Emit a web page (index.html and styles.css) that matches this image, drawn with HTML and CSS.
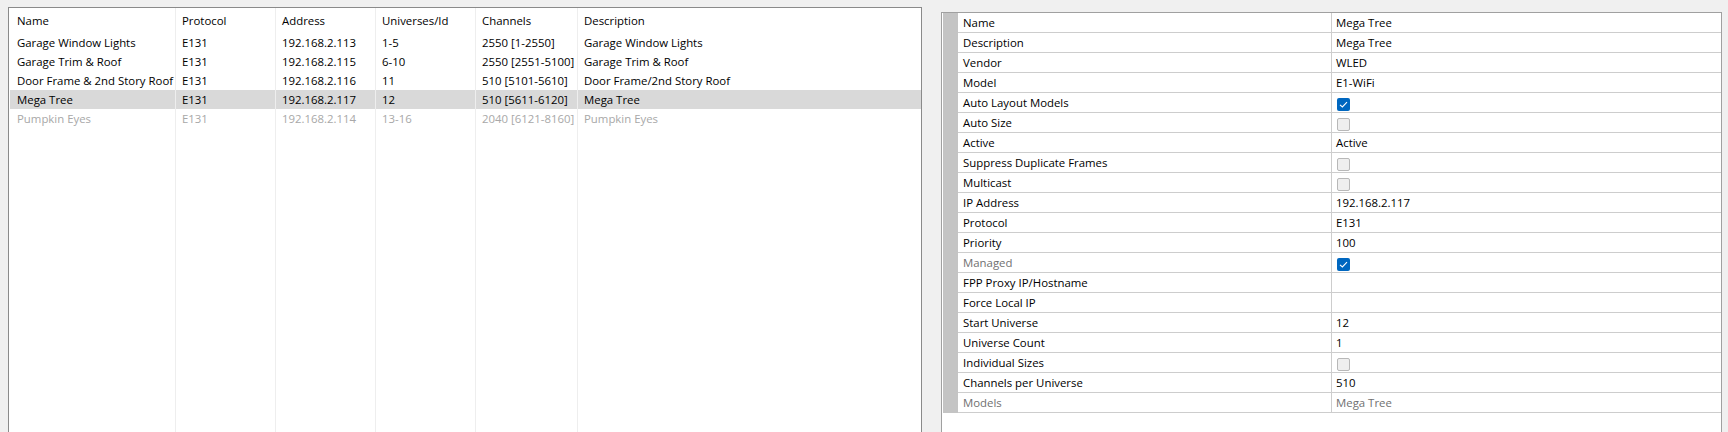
FILE: index.html
```html
<!DOCTYPE html>
<html lang="en">
<head>
  <meta charset="UTF-8" />
  <title>Controllers</title>
  <link rel="stylesheet" href="styles.css">
</head>
<body>

<div class="layout">

  <div class="list-panel">
    <div class="list">
      <div class="col col-name">
        <div class="head">Name</div>
        <div class="cell">Garage Window Lights</div>
        <div class="cell">Garage Trim &amp; Roof</div>
        <div class="cell">Door Frame &amp; 2nd Story Roof</div>
        <div class="cell sel">Mega Tree</div>
        <div class="cell off">Pumpkin Eyes</div>
      </div>
      <div class="col col-proto">
        <div class="head">Protocol</div>
        <div class="cell">E131</div>
        <div class="cell">E131</div>
        <div class="cell">E131</div>
        <div class="cell sel">E131</div>
        <div class="cell off">E131</div>
      </div>
      <div class="col col-addr">
        <div class="head">Address</div>
        <div class="cell">192.168.2.113</div>
        <div class="cell">192.168.2.115</div>
        <div class="cell">192.168.2.116</div>
        <div class="cell sel">192.168.2.117</div>
        <div class="cell off">192.168.2.114</div>
      </div>
      <div class="col col-univ">
        <div class="head">Universes/Id</div>
        <div class="cell">1-5</div>
        <div class="cell">6-10</div>
        <div class="cell">11</div>
        <div class="cell sel">12</div>
        <div class="cell off">13-16</div>
      </div>
      <div class="col col-chan">
        <div class="head">Channels</div>
        <div class="cell">2550 [1-2550]</div>
        <div class="cell">2550 [2551-5100]</div>
        <div class="cell">510 [5101-5610]</div>
        <div class="cell sel">510 [5611-6120]</div>
        <div class="cell off">2040 [6121-8160]</div>
      </div>
      <div class="col col-desc">
        <div class="head">Description</div>
        <div class="cell">Garage Window Lights</div>
        <div class="cell">Garage Trim &amp; Roof</div>
        <div class="cell">Door Frame/2nd Story Roof</div>
        <div class="cell sel">Mega Tree</div>
        <div class="cell off">Pumpkin Eyes</div>
      </div>
    </div>
  </div>

  <div class="prop-panel">
    <div class="props">
      <div class="prow"><div class="gutter"></div><div class="label">Name</div><div class="value">Mega Tree</div></div>
      <div class="prow"><div class="gutter"></div><div class="label">Description</div><div class="value">Mega Tree</div></div>
      <div class="prow"><div class="gutter"></div><div class="label">Vendor</div><div class="value">WLED</div></div>
      <div class="prow"><div class="gutter"></div><div class="label">Model</div><div class="value">E1-WiFi</div></div>
      <div class="prow"><div class="gutter"></div><div class="label">Auto Layout Models</div><div class="value"><span class="check on"><svg viewBox="0 0 13 13" width="13" height="13"><polyline points="3,6.8 5.4,9 10,4.2" fill="none" stroke="#fff" stroke-width="1.1"/></svg></span></div></div>
      <div class="prow"><div class="gutter"></div><div class="label">Auto Size</div><div class="value"><span class="check"></span></div></div>
      <div class="prow"><div class="gutter"></div><div class="label">Active</div><div class="value">Active</div></div>
      <div class="prow"><div class="gutter"></div><div class="label">Suppress Duplicate Frames</div><div class="value"><span class="check"></span></div></div>
      <div class="prow"><div class="gutter"></div><div class="label">Multicast</div><div class="value"><span class="check"></span></div></div>
      <div class="prow"><div class="gutter"></div><div class="label">IP Address</div><div class="value">192.168.2.117</div></div>
      <div class="prow"><div class="gutter"></div><div class="label">Protocol</div><div class="value">E131</div></div>
      <div class="prow"><div class="gutter"></div><div class="label">Priority</div><div class="value">100</div></div>
      <div class="prow"><div class="gutter"></div><div class="label dim">Managed</div><div class="value"><span class="check on"><svg viewBox="0 0 13 13" width="13" height="13"><polyline points="3,6.8 5.4,9 10,4.2" fill="none" stroke="#fff" stroke-width="1.1"/></svg></span></div></div>
      <div class="prow"><div class="gutter"></div><div class="label">FPP Proxy IP/Hostname</div><div class="value"></div></div>
      <div class="prow"><div class="gutter"></div><div class="label">Force Local IP</div><div class="value"></div></div>
      <div class="prow"><div class="gutter"></div><div class="label">Start Universe</div><div class="value">12</div></div>
      <div class="prow"><div class="gutter"></div><div class="label">Universe Count</div><div class="value">1</div></div>
      <div class="prow"><div class="gutter"></div><div class="label">Individual Sizes</div><div class="value"><span class="check"></span></div></div>
      <div class="prow"><div class="gutter"></div><div class="label">Channels per Universe</div><div class="value">510</div></div>
      <div class="prow"><div class="gutter"></div><div class="label dim">Models</div><div class="value dim">Mega Tree</div></div>
    </div>
  </div>

</div>

</body>
</html>
```

FILE: styles.css
```css
body {
  margin: 0;
  background: #f0f0f0;
  font-family: 'Open Sans', 'Noto Sans', sans-serif;
  font-size: 11.4px;
  color: #000;
  height: 432px;
  overflow: hidden;
}
.layout {
  display: flex;
  align-items: flex-start;
  padding: 7px 0 0 8px;
  gap: 19px;
}

/* controller list */
.list-panel {
  width: 914px;
  height: 425px;
  box-sizing: border-box;
  border: 1px solid #8a8a8a;
  border-bottom: none;
  background: #fff;
  padding-left: 1px;
}
.list {
  display: flex;
  height: 100%;
}
.col {
  border-right: 1px solid #eeeeee;
  box-sizing: border-box;
}
.col-name { width: 166px; }
.col-proto, .col-addr, .col-univ { width: 100px; }
.col-chan { width: 102px; }
.col-desc { flex: 1; border-right: none; }
.head {
  height: 25px;
  line-height: 25px;
  padding-left: 6px;
  white-space: nowrap;
}
.col-name .head, .col-name .cell { padding-left: 7px; }
.cell {
  height: 19px;
  line-height: 19px;
  padding-left: 6px;
  white-space: nowrap;
}
.cell.sel { background: #d9d9d9; }
.cell.off { color: #a8a8a8; }

/* property grid */
.prop-panel {
  margin-top: 5px;
  width: 781px;
  height: 420px;
  box-sizing: border-box;
  border: 1px solid #a0a0a0;
  border-bottom: none;
  background: #fff;
  padding-left: 1px;
}
.prow {
  display: grid;
  grid-template-columns: 15px 374px 1fr;
  height: 20px;
}
.gutter { background: #c4c4c4; }
.label, .value {
  box-sizing: border-box;
  height: 20px;
  line-height: 19px;
  border-bottom: 1px solid #cdcdcd;
  white-space: nowrap;
}
.label {
  padding-left: 5px;
  border-right: 1px solid #cdcdcd;
}
.value { padding-left: 4px; }
.dim { color: #707070; }

.check {
  display: block;
  width: 13px;
  height: 13px;
  margin: 5px 0 0 1px;
  box-sizing: border-box;
  border: 1px solid #b8b8b8;
  border-radius: 2px;
  background: #efefef;
}
.check.on {
  border: none;
  background: #0067c0;
}
.check svg { display: block; }
```
